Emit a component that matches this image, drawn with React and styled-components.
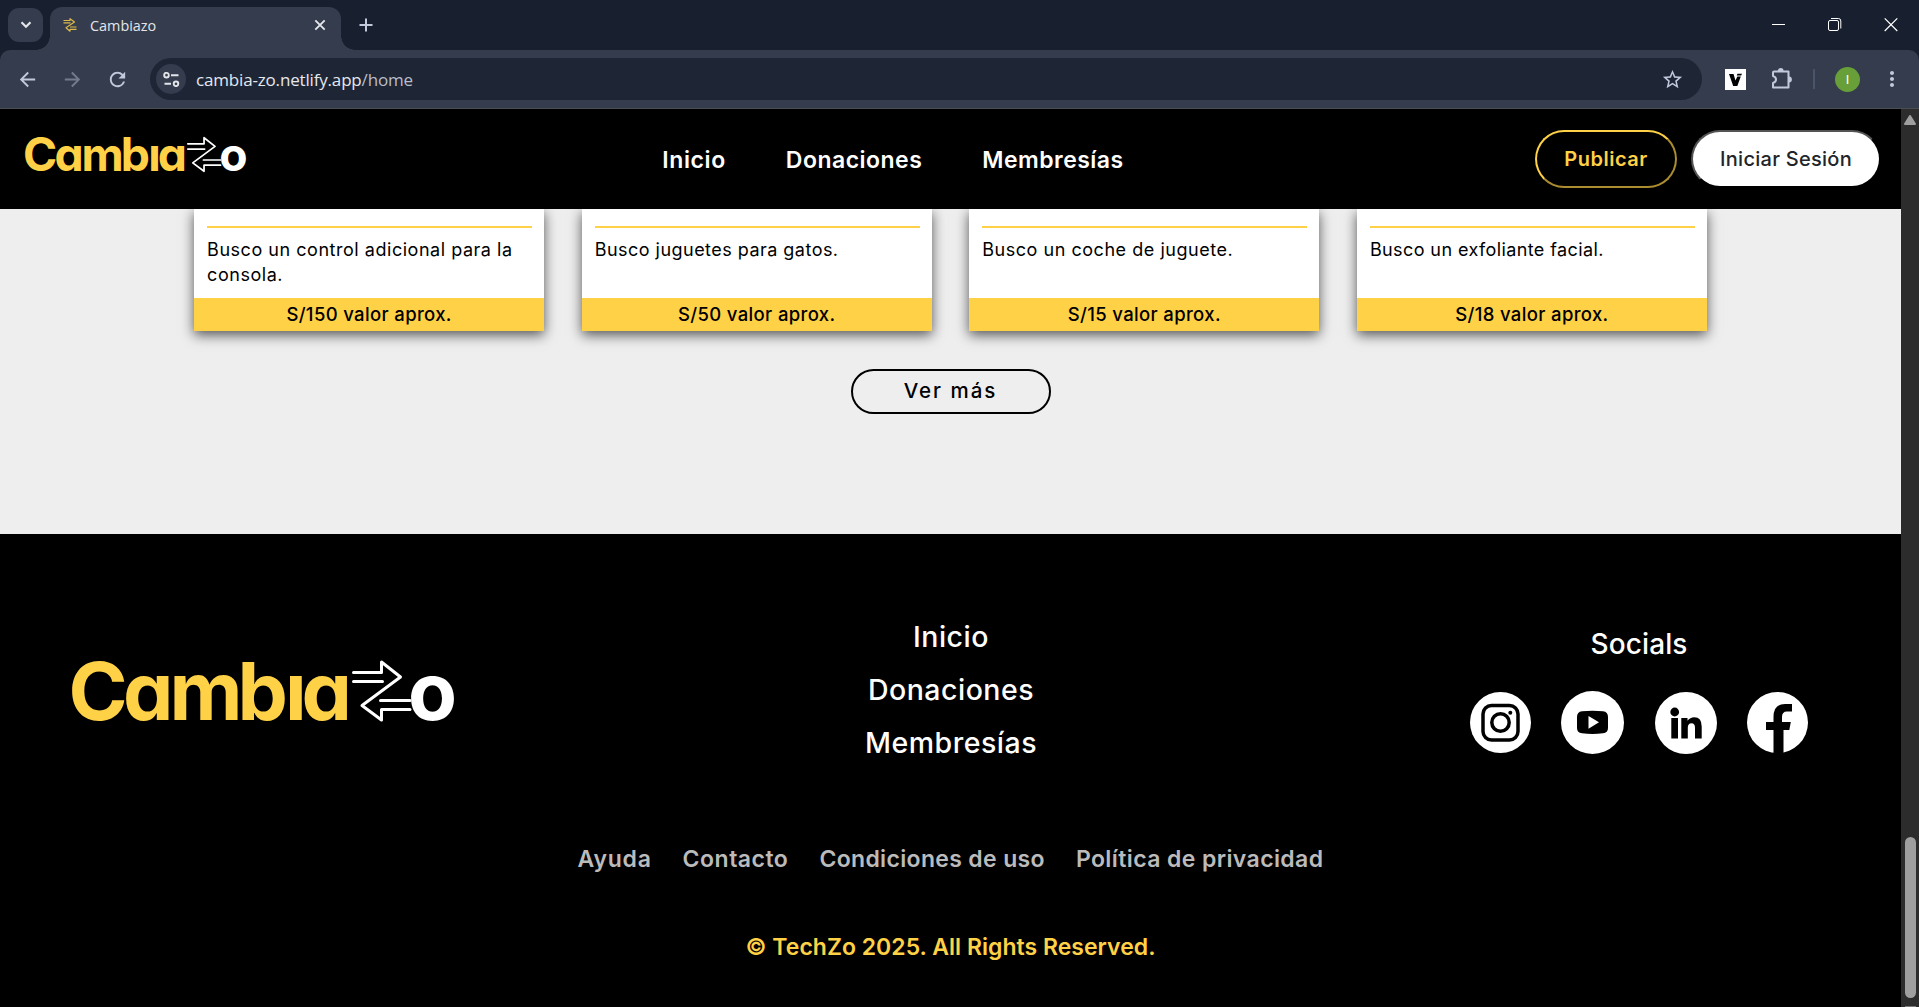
import React from "react";
import styled, { createGlobalStyle } from "styled-components";
import { MdArrowBack, MdArrowForward, MdRefresh, MdStarBorder, MdMoreVert } from "react-icons/md";

const yellow = "#ffd146";

const GlobalStyle = createGlobalStyle`
  * { box-sizing: border-box; }
  body { margin: 0; overflow: hidden; font-family: Inter, "Open Sans", sans-serif; }
  p { margin: 0; }
`;

const Window = styled.div`
  width: 1919px;
  height: 1007px;
  display: flex;
  flex-direction: column;
  background: #18202f;
  overflow: hidden;
`;

const TabStrip = styled.div`
  flex: none;
  height: 50px;
  display: flex;
  align-items: flex-start;
  color: #e3e5ea;
`;
const TabSearch = styled.div`
  width: 35px;
  height: 34px;
  margin: 8px 7px 0 8px;
  border-radius: 11px;
  background: #343c4d;
  display: grid;
  place-items: center;
`;
const Tab = styled.div`
  position: relative;
  width: 291px;
  height: 43px;
  margin-top: 7px;
  padding: 0 15px 7px 13px;
  border-radius: 12px 12px 0 0;
  background: #343c4d;
  display: flex;
  align-items: center;
  &::before, &::after {
    content: "";
    position: absolute;
    bottom: 0;
    width: 14px;
    height: 14px;
  }
  &::before { left: -14px; background: radial-gradient(circle at 0 0, transparent 13.5px, #343c4d 14px); }
  &::after { right: -14px; background: radial-gradient(circle at 100% 0, transparent 13.5px, #343c4d 14px); }
`;
const TabTitle = styled.span`
  flex: 1;
  margin: 1px 0 0 13px;
  font: 400 14.4px/20px "Open Sans", sans-serif;
`;
const NewTab = styled.div`
  margin: 18px 0 0 18px;
  display: flex;
`;
const WindowControls = styled.div`
  margin: 18px 21px 0 auto;
  display: flex;
  align-items: center;
  gap: 42px;
`;

const Toolbar = styled.div`
  flex: none;
  height: 59px;
  padding: 0 15px 0 16px;
  border-radius: 10px 10px 0 0;
  border-bottom: 1px solid #4a4d52;
  background: #343c4d;
  display: flex;
  align-items: center;
  color: #c3c9dc;
`;
const ToolIcon = styled.div`
  display: flex;
  width: ${(p) => p.$w}px;
  opacity: ${(p) => (p.$dim ? 0.45 : 1)};
`;
const AddressBar = styled.div`
  flex: 1;
  height: 42px;
  padding: 0 18px 0 6px;
  border-radius: 21px;
  background: #1e2636;
  display: flex;
  align-items: center;
`;
const SiteInfo = styled.div`
  width: 30px;
  height: 30px;
  border-radius: 50%;
  background: #343c4d;
  display: grid;
  place-items: center;
`;
const Url = styled.div`
  flex: 1;
  margin-left: 10px;
  padding-top: 1px;
  color: #e6e8ee;
  font: 400 17px/24px "Open Sans", sans-serif;
  letter-spacing: -0.17px;
  em { font-style: normal; color: #b9bdc9; }
`;
const Extension = styled.div`
  margin-left: ${(p) => p.$gap || 23}px;
  display: flex;
`;
const Divider = styled.div`
  width: 2px;
  height: 20px;
  margin: 0 20px 0 19px;
  background: #4a5468;
`;
const Avatar = styled.div`
  width: 25px;
  height: 25px;
  border-radius: 50%;
  background: #689f38;
  color: #fff;
  display: grid;
  place-items: center;
  font: 400 13px/1 Roboto, sans-serif;
  margin-right: 20px;
`;

const Viewport = styled.div`
  flex: 1;
  min-height: 0;
  display: flex;
`;
const Page = styled.div`
  flex: 1;
  display: flex;
  flex-direction: column;
  background: #eee;
`;
const Scrollbar = styled.div`
  width: 18px;
  background: #2c2c2c;
  display: flex;
  flex-direction: column;
  align-items: center;
  padding-top: 6px;
`;
const Thumb = styled.div`
  width: 11px;
  height: 161px;
  margin: 712px 0 8px 1px;
  border-radius: 6px;
  background: #9f9f9f;
`;
const ScrollEnd = styled.div`
  width: 11px;
  height: 1px;
  margin-left: 1px;
  background: #7a7a7a;
`;

const Header = styled.header`
  position: relative;
  z-index: 1;
  flex: none;
  height: 100px;
  padding: 0 20px 0 25px;
  background: #000;
  display: flex;
  align-items: center;
  justify-content: space-between;
`;
const HeaderLogo = styled.div`
  width: 226px;
  padding-bottom: 10px;
  display: flex;
`;
const Nav = styled.nav`
  display: flex;
  gap: 60px;
  padding-top: 1px;
`;
const Label = styled.span`
  display: block;
  white-space: ${(p) => (p.$wrap ? "normal" : "nowrap")};
  color: ${(p) => p.$color || "#fff"};
  font-size: ${(p) => p.$size || 23}px;
  font-weight: ${(p) => p.$weight || 500};
  line-height: ${(p) => p.$lh || 30}px;
  letter-spacing: ${(p) => p.$ls || 0}px;
`;
const Actions = styled.div`
  display: flex;
  gap: 14px;
`;
const Pill = styled.button`
  width: ${(p) => p.$w}px;
  height: 58px;
  padding: 0;
  border: 2px outset ${(p) => (p.$filled ? "#000" : yellow)};
  border-radius: 29px;
  background: ${(p) => (p.$filled ? "#fff" : "#000")};
  font-family: inherit;
  display: grid;
  place-items: center;
`;

const Cards = styled.section`
  display: grid;
  grid-template-columns: repeat(4, 350px);
  justify-content: center;
  column-gap: 37.6px;
`;
const Card = styled.article`
  height: 122px;
  background: #fff;
  box-shadow: 0 4px 12px rgba(0, 0, 0, 0.65);
  display: flex;
  flex-direction: column;
`;
const CardBody = styled.div`
  flex: 1;
  margin: 17px 12px 0 13px;
  border-top: 2px solid ${yellow};
  padding-top: 9px;
`;
const Price = styled.div`
  height: 33px;
  padding-bottom: 1px;
  background: ${yellow};
  display: grid;
  place-items: center;
`;
const More = styled.button`
  align-self: center;
  width: 200px;
  height: 45px;
  margin: 38px 0 120px;
  padding: 0 0 1px;
  border: 2px solid #000;
  border-radius: 23px;
  background: transparent;
  font-family: inherit;
  display: grid;
  place-items: center;
`;

const Footer = styled.footer`
  flex: 1;
  background: #000;
  display: flex;
  flex-direction: column;
  align-items: center;
`;
const FooterTop = styled.div`
  width: 100%;
  height: 246px;
  padding: 76px 93px 0 72px;
  display: grid;
  grid-template-columns: 382px 1fr 338px;
`;
const FooterLogo = styled.div`
  padding-top: 49px;
`;
const FooterNav = styled.nav`
  display: flex;
  flex-direction: column;
  align-items: center;
  gap: 15px;
  padding: 8px 22px 0 0;
`;
const Socials = styled.div`
  display: flex;
  flex-direction: column;
  align-items: center;
  padding-top: 15px;
`;
const SocialRow = styled.div`
  width: 338px;
  margin-top: 28px;
  display: flex;
  justify-content: space-between;
  align-items: center;
`;
const Legal = styled.div`
  height: 152px;
  padding-top: 64px;
  display: flex;
  gap: 31px;
`;

const LogoText = styled.text`
  font: 750 80px Inter, sans-serif;
  font-feature-settings: "cv11";
`;

function Logo({ width }) {
  return (
    <svg width={width} height={(width * 62) / 382} viewBox="0 0 382 62" overflow="visible">
      <LogoText x="-3.500 51 97.500 165.500 213 229.500" y="61" fill={yellow}>Cambıa</LogoText>
      <g fill="none" stroke="#fff" strokeWidth="3" strokeLinejoin="round" strokeLinecap="round">
        <path d="M281.500 13.500H309.500V3L328.500 18L290 46.500L309.500 61V50.500H338" />
        <path d="M281.500 22.500H310.500M308.500 41.500H338" />
      </g>
      <LogoText x="336" y="61" fill="#fff">o</LogoText>
    </svg>
  );
}

const offers = [
  { text: "Busco un control adicional para la consola.", price: "S/150 valor aprox.", ls: 0.53 },
  { text: "Busco juguetes para gatos.", price: "S/50 valor aprox.", ls: 0.47 },
  { text: "Busco un coche de juguete.", price: "S/15 valor aprox.", ls: 0.53 },
  { text: "Busco un exfoliante facial.", price: "S/18 valor aprox.", ls: 0.4 },
];
const sections = [
  { name: "Inicio", ls: 0.6 },
  { name: "Donaciones", ls: 0.48 },
  { name: "Membresías", ls: 0.48 },
];
const legal = [
  { name: "Ayuda", ls: 0.75 },
  { name: "Contacto", ls: 0.5 },
  { name: "Condiciones de uso", ls: 0.34 },
  { name: "Política de privacidad", ls: 0.4 },
];

export default function App() {
  return (
    <Window>
      <GlobalStyle />
      <TabStrip>
        <TabSearch>
          <svg width="12" height="8" viewBox="0 0 12 8" fill="none" stroke="#e3e5ea" strokeWidth="2.200"><path d="M1.500 1.200L6 5.700L10.500 1.200" /></svg>
        </TabSearch>
        <Tab>
          <svg width="14" height="14" viewBox="0 0 14 14" fill="none" stroke="#dcb94a" strokeWidth="1.200" strokeLinejoin="round">
            <path d="M.5 2.500H7V.7L11.500 4L3 9.700L7 13.200V11.300H13.500M.5 4.800H7.500M7 9H13.500" />
          </svg>
          <TabTitle>Cambiazo</TabTitle>
          <svg width="12" height="12" viewBox="0 0 12 12" stroke="#e3e5ea" strokeWidth="1.900"><path d="M1.300 1.300L10.700 10.700M10.700 1.300L1.300 10.700" /></svg>
        </Tab>
        <NewTab>
          <svg width="14" height="14" viewBox="0 0 14 14" stroke="#c3c9dc" strokeWidth="2"><path d="M7 .5V13.500M.5 7H13.500" /></svg>
        </NewTab>
        <WindowControls>
          <svg width="14" height="14" viewBox="0 0 14 14" stroke="#fff"><path d="M0 6.500H13" /></svg>
          <svg width="14" height="14" viewBox="0 0 14 14" fill="none" stroke="#fff">
            <rect x=".5" y="2.500" width="10" height="10" rx="1.500" />
            <path d="M3 .5H10.500Q12.800 .5 12.800 3V10.500" />
          </svg>
          <svg width="14" height="14" viewBox="0 0 14 14" stroke="#fff" strokeWidth="1.200"><path d="M.7 .4L13.300 13M13.300 .4L.7 13" /></svg>
        </WindowControls>
      </TabStrip>

      <Toolbar>
        <ToolIcon $w={45}><MdArrowBack size={23} /></ToolIcon>
        <ToolIcon $w={45} $dim><MdArrowForward size={23} /></ToolIcon>
        <ToolIcon $w={44}><MdRefresh size={23} /></ToolIcon>
        <AddressBar>
          <SiteInfo>
            <svg width="17" height="15" viewBox="0 0 17 15" fill="none" stroke="#e3e5ea" strokeWidth="1.900">
              <circle cx="3.500" cy="3.200" r="2.300" /><path d="M8 3.200H15.500M1.500 11.800H8" /><circle cx="13" cy="11.800" r="2.300" />
            </svg>
          </SiteInfo>
          <Url>cambia-zo.netlify.app<em>/home</em></Url>
          <MdStarBorder size={23} />
        </AddressBar>
        <Extension>
          <svg width="21" height="21" viewBox="0 0 21 21">
            <rect width="21" height="21" fill="#fff" />
            <path d="M4 5H8.500L10.500 11.500L12.300 7.500H15.800L12.300 17H8.200Z M12.500 4.800H17L16.200 6.500H11.700Z" fill="#000" />
          </svg>
        </Extension>
        <Extension $gap={24}>
          <svg width="24" height="22" viewBox="0 0 24 22" fill="none" stroke="#c3c9dc" strokeWidth="2" strokeLinejoin="round">
            <path d="M4 3.500H18.500V19.500H3V15Q6 14 6 11.500T3 8V4.500Q3 3.500 4 3.500Z" />
            <path d="M8.800 3A1.900 1.900 0 0 1 12.600 3ZM19 9.600A1.900 1.900 0 0 1 19 13.400Z" fill="#c3c9dc" />
          </svg>
        </Extension>
        <Divider />
        <Avatar>I</Avatar>
        <MdMoreVert size={24} />
      </Toolbar>

      <Viewport>
        <Page>
          <Header>
            <HeaderLogo><Logo width={221} /></HeaderLogo>
            <Nav>{sections.map((s) => <Label key={s.name} $weight={580} $ls={s.ls}>{s.name}</Label>)}</Nav>
            <Actions>
              <Pill $w={142}><Label $size={20} $weight={600} $ls={0.5} $color={yellow}>Publicar</Label></Pill>
              <Pill $w={190} $filled><Label $size={20} $ls={0.27} $color="#212529">Iniciar Sesión</Label></Pill>
            </Actions>
          </Header>
          <Cards>
            {offers.map((o) => (
              <Card key={o.price}>
                <CardBody>
                  <Label as="p" $wrap $size={18} $weight={400} $lh={25} $ls={o.ls} $color="#000">{o.text}</Label>
                </CardBody>
                <Price><Label $size={18.5} $weight={550} $ls={0.35} $color="#000">{o.price}</Label></Price>
              </Card>
            ))}
          </Cards>
          <More><Label $size={20.5} $color="#000" $ls={2}>Ver más</Label></More>
          <Footer>
            <FooterTop>
              <FooterLogo><Logo width={382} /></FooterLogo>
              <FooterNav>{sections.map((s) => <Label key={s.name} $size={28.5} $weight={530} $lh={38} $ls={0.5}>{s.name}</Label>)}</FooterNav>
              <Socials>
                <Label $size={28} $weight={530} $lh={38} $ls={0.1}>Socials</Label>
                <SocialRow>
                  <svg width="61" height="61" viewBox="0 0 61 61" fill="none" stroke="#000">
                    <circle cx="30.500" cy="30.500" r="30.500" fill="#fff" stroke="none" />
                    <rect x="13" y="13.500" width="35" height="34.500" rx="8.500" strokeWidth="3.500" />
                    <circle cx="30.500" cy="30.500" r="8.700" strokeWidth="3.500" />
                    <circle cx="40.300" cy="20.800" r="2" fill="#000" stroke="none" />
                  </svg>
                  <svg width="63" height="63" viewBox="0 0 63 63">
                    <circle cx="31.500" cy="31.500" r="31.500" fill="#fff" />
                    <path d="M21 20.300Q31.500 19 42 20.300Q47 20.800 47 26V37Q47 41.800 42 42.300Q31.500 43.500 21 42.300Q16 41.800 16 37V26Q16 20.800 21 20.300Z" fill="#000" />
                    <path d="M27.500 25L38 31.300L27.500 37.800Z" fill="#fff" />
                  </svg>
                  <svg width="62" height="62" viewBox="0 0 62 62">
                    <circle cx="31" cy="31" r="31" fill="#fff" />
                    <circle cx="19.700" cy="20" r="4.400" />
                    <path d="M16.300 26H23V46.500H16.300ZM26.300 26H32.500V28.800Q35 25.300 39.300 25.300Q46.700 25.300 46.700 34.500V46.500H40V35.800Q40 31.300 36.500 31.300Q32.800 31.300 32.800 35.800V46.500H26.300Z" />
                  </svg>
                  <svg width="61" height="61" viewBox="0 0 61 61">
                    <circle cx="30.500" cy="30.500" r="30.500" fill="#fff" />
                    <path d="M26.500 61V38H19V30H26.500V25Q26.500 12 38 12H45V19.500H40Q35 19.500 35 25V30H43.800L42.300 38H36.500V61Z" />
                  </svg>
                </SocialRow>
              </Socials>
            </FooterTop>
            <Legal>{legal.map((l) => <Label key={l.name} $weight={560} $ls={l.ls} $color="#bbb">{l.name}</Label>)}</Legal>
            <Label $weight={580} $ls={0.02} $color={yellow}>© TechZo 2025. All Rights Reserved.</Label>
          </Footer>
        </Page>
        <Scrollbar>
          <svg width="12" height="10" viewBox="0 0 12 10"><path d="M6 1L11 9H1Z" fill="#9f9f9f" stroke="#9f9f9f" strokeWidth="2" strokeLinejoin="round" /></svg>
          <Thumb />
          <ScrollEnd />
        </Scrollbar>
      </Viewport>
    </Window>
  );
}
